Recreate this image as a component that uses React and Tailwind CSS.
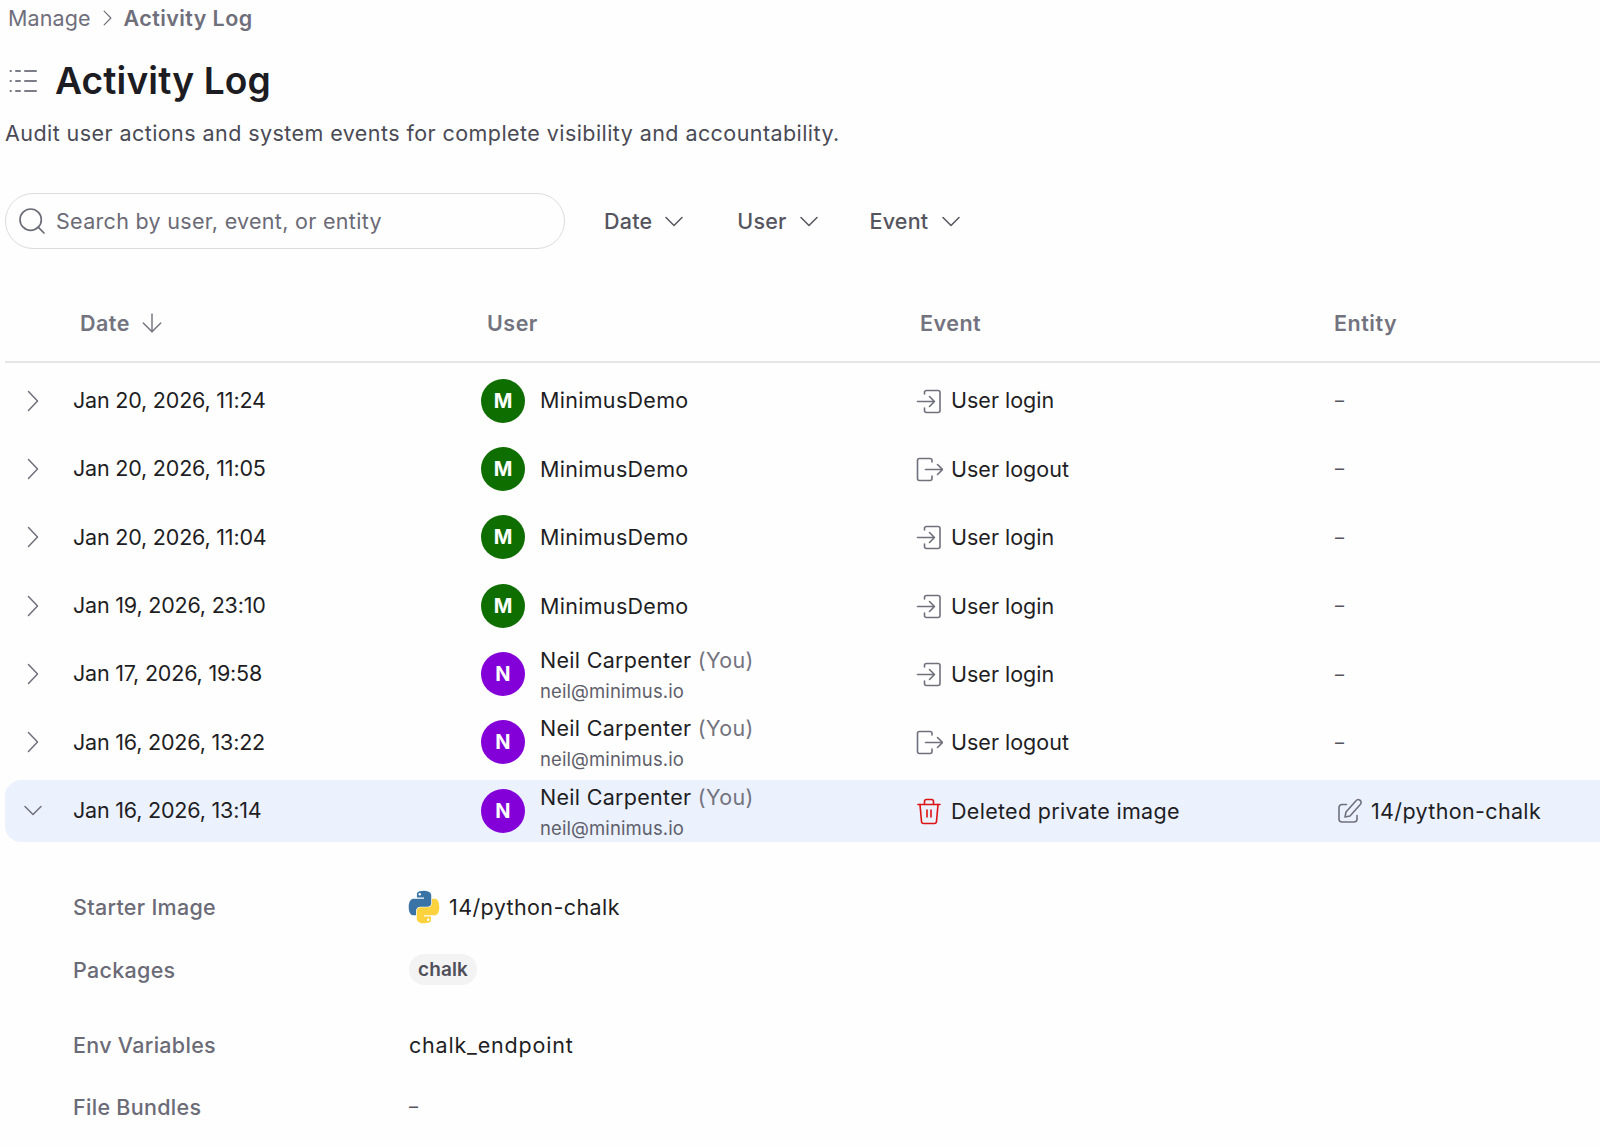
import React from 'react';
import { Search, ArrowDown } from 'lucide-react';

const rows = [
  { date: 'Jan 20, 2026, 11:24', user: 'demo', event: 'login' },
  { date: 'Jan 20, 2026, 11:05', user: 'demo', event: 'logout' },
  { date: 'Jan 20, 2026, 11:04', user: 'demo', event: 'login' },
  { date: 'Jan 19, 2026, 23:10', user: 'demo', event: 'login' },
  { date: 'Jan 17, 2026, 19:58', user: 'neil', event: 'login' },
  { date: 'Jan 16, 2026, 13:22', user: 'neil', event: 'logout' },
  { date: 'Jan 16, 2026, 13:14', user: 'neil', event: 'deleted', open: true },
];

function CaretRight({ w = 12, h = 22 }) {
  return (
    <svg width={w} height={h} viewBox="0 0 12 22" fill="none" stroke="currentColor" strokeWidth="1.500" strokeLinecap="round" strokeLinejoin="round" preserveAspectRatio="none">
      <path d="M1.500 1.500L10.500 11 1.500 20.500" />
    </svg>
  );
}

function CaretDown({ w = 18, h = 11 }) {
  return (
    <svg width={w} height={h} viewBox="0 0 18 11" fill="none" stroke="currentColor" strokeWidth="1.500" strokeLinecap="round" strokeLinejoin="round">
      <path d="M1 1.500L9 9.500 17 1.500" />
    </svg>
  );
}

function LoginIcon() {
  return (
    <svg width="26" height="26" viewBox="0 0 26 26" fill="none" stroke="#71717d" strokeWidth="1.600" strokeLinecap="round" strokeLinejoin="round">
      <path d="M8.500 6V4.500C8.500 3.400 9.400 2.500 10.500 2.500H22c1.100 0 2 .9 2 2v18c0 1.100-.9 2-2 2H10.500c-1.100 0-2-.9-2-2V20" />
      <path d="M1.500 13.500H18M13.500 8.500l5 5-5 5" />
    </svg>
  );
}

function LogoutIcon() {
  return (
    <svg width="27" height="26" viewBox="0 0 27 26" fill="none" stroke="#71717d" strokeWidth="1.600" strokeLinecap="round" strokeLinejoin="round">
      <path d="M16 6V4.500c0-1.100-.9-2-2-2H3.500c-1.100 0-2 .9-2 2v18c0 1.100.9 2 2 2H14c1.100 0 2-.9 2-2V20" />
      <path d="M9.500 13.500H26M21.500 8.500l5 5-5 5" />
    </svg>
  );
}

function TrashIcon() {
  return (
    <svg width="26" height="28" viewBox="0 0 26 28" fill="none" stroke="#dc1414" strokeWidth="1.600" strokeLinecap="round" strokeLinejoin="round" className="my-[-2px]">
      <path d="M2 7.500h22" />
      <path d="M8.500 7.500V4.500c0-1.100.9-2 2-2h5c1.100 0 2 .9 2 2v3" />
      <path d="M4 7.500l1.500 17c.1 1.200 1 2 2.200 2h10.600c1.200 0 2.100-.8 2.200-2L22 7.500" />
      <path d="M11 13v7M15 13v7" />
    </svg>
  );
}

function PenIcon() {
  return (
    <svg width="26" height="26" viewBox="0 0 26 26" fill="none" stroke="#71717d" strokeWidth="1.600" strokeLinecap="round" strokeLinejoin="round">
      <path d="M8.500 6.500H4a3 3 0 0 0-3 3V21a3 3 0 0 0 3 3h12a3 3 0 0 0 3-3v-3.500" />
      <path d="M7 19l1-5L18 2.800a2.600 2.600 0 0 1 4.500 3.400L12 18z" />
    </svg>
  );
}

function ListIcon() {
  return (
    <svg width="30" height="26" viewBox="0 0 30 26" fill="none" stroke="#7d7d88" strokeWidth="2" strokeLinecap="round">
      <path d="M1.500 3h.5M7 3h4M16 3h11M1.500 13h.5M7 13h4M16 13h11M1.500 23h.5M7 23h4M16 23h11" />
    </svg>
  );
}

function PythonIcon() {
  const shape = 'M11.900 .5C6.600 .5 7 2.800 7 2.800v2.500h5v.8H5S1.200 5.600 1.200 11.900s3.200 6 3.200 6h2v-2.900s-.1-3.100 3-3.100h4.900s2.800 0 2.800-2.700V3.400S16.900 .5 11.900 .5z';
  return (
    <svg width="34" height="34" viewBox="0 0 24 24" className="ml-[-2px]">
      <path d={shape} fill="#3a74a6" />
      <circle cx="9" cy="3" r=".85" fill="#fff" />
      <g transform="rotate(180 12 12)">
        <path d={shape} fill="#fdd23f" />
        <circle cx="9" cy="3" r=".85" fill="#fff" />
      </g>
    </svg>
  );
}

function UserCell({ user }) {
  if (user === 'demo') {
    return (
      <div className="flex items-center gap-[15px]">
        <div className="w-[44px] h-[44px] rounded-full bg-[#0f6e00] text-white font-bold text-[20px] flex items-center justify-center">M</div>
        <span className="tracking-[0.3px]">MinimusDemo</span>
      </div>
    );
  }
  return (
    <div className="flex items-center gap-[15px]">
      <div className="w-[44px] h-[44px] rounded-full bg-[#8400d8] text-white font-bold text-[20px] flex items-center justify-center">N</div>
      <div className="flex flex-col pt-[2px] mb-[-2px]">
        <span className="leading-[30px] tracking-[0.3px]">Neil Carpenter <span className="text-[#73737f]">(You)</span></span>
        <span className="text-[18.500px] leading-[32px] text-[#5f5f6b]">neil@minimus.io</span>
      </div>
    </div>
  );
}

function EventCell({ event }) {
  if (event === 'deleted') {
    return (
      <div className="flex items-center gap-[9px]">
        <TrashIcon />
        <span className="tracking-[0.3px]">Deleted private image</span>
      </div>
    );
  }
  return (
    <div className="flex items-center gap-[9px]">
      {event === 'login' ? <LoginIcon /> : <div className="w-[26px]"><LogoutIcon /></div>}
      <span className="tracking-[0px]">{event === 'login' ? 'User login' : 'User logout'}</span>
    </div>
  );
}

function DetailRow({ label, children, className }) {
  return (
    <div className={`flex items-center ${className}`}>
      <div className="w-[336px] text-[#6b6b77] font-medium tracking-[0.3px]">{label}</div>
      {children}
    </div>
  );
}

export default function App() {
  return (
    <div className="h-[1147px] overflow-hidden bg-[#fefefe] pl-[5px] text-[21.500px] text-[#1e1e24] font-['Inter',sans-serif] tracking-[0.1px]">
      <div className="flex items-center pl-[3px] h-[36px] text-[21.500px] text-[#6f6f7b]">
        <span>Manage</span>
        <span className="mx-[12px]"><CaretRight w={9} h={16} /></span>
        <span className="font-semibold tracking-[0.4px]">Activity Log</span>
      </div>

      <div className="flex items-center gap-[16px] pl-[4px] mt-[20px] h-[50px]">
        <ListIcon />
        <h1 className="text-[37.200px] font-semibold text-[#1c1c22]">Activity Log</h1>
      </div>

      <p className="mt-[13px] leading-[28px] text-[#4a4a55] tracking-[0.43px]">Audit user actions and system events for complete visibility and accountability.</p>

      <div className="flex items-center mt-[46px]">
        <div className="w-[560px] h-[56px] rounded-full border border-[#dcdce0] flex items-center pl-[10px] gap-[8px] text-[#6b6b77] tracking-[0.3px]">
          <Search size={32} strokeWidth={1.250} />
          <span>Search by user, event, or entity</span>
        </div>
        <div className="flex items-center gap-[13px] ml-[39px] text-[#55555f] font-medium tracking-[0.2px]">
          <span>Date</span>
          <CaretDown />
        </div>
        <div className="flex items-center gap-[13px] ml-[54px] text-[#55555f] font-medium tracking-[0.2px]">
          <span>User</span>
          <CaretDown />
        </div>
        <div className="flex items-center gap-[14px] ml-[52px] text-[#55555f] font-medium tracking-[0.2px]">
          <span>Event</span>
          <CaretDown />
        </div>
      </div>

      <div className="grid grid-cols-[476px_435px_415px_1fr] items-center h-[114px] pt-[36px] border-b-2 border-[#e6e6e8] text-[#73737f] font-semibold tracking-[0.5px]">
        <div className="flex items-center gap-[7px] pl-[75px]">
          <span>Date</span>
          <ArrowDown size={30} strokeWidth={1.150} />
        </div>
        <div className="pl-[6px]">User</div>
        <div className="pl-[4px]">Event</div>
        <div className="pl-[3px]">Entity</div>
      </div>

      <div className="flex flex-col gap-[6.400px] mt-[6.500px]">
        {rows.map((row) => (
          <div
            key={row.date}
            className={`grid grid-cols-[476px_435px_415px_1fr] items-center h-[62px] ${row.open ? 'bg-[#ebf1fd] rounded-l-[16px]' : ''}`}
          >
            <div className="flex items-center">
              <div className="w-[56px] flex justify-center text-[#6f6f7b]">
                {row.open ? <CaretDown /> : <CaretRight />}
              </div>
              <span className="ml-[12px] tracking-[-0.2px] pb-[1px]">{row.date}</span>
            </div>
            <UserCell user={row.user} />
            <EventCell event={row.event} />
            {row.open ? (
              <div className="flex items-center gap-[7px] pl-[7px]">
                <PenIcon />
                <span className="tracking-[0.35px]">14/python-chalk</span>
              </div>
            ) : (
              <div className="pl-[4px] text-[#55555f] text-[18px]">–</div>
            )}
          </div>
        ))}
      </div>

      <div className="pl-[68px] mt-[41px] flex flex-col">
        <DetailRow label="Starter Image" className="h-[48px]">
          <div className="flex items-center gap-[8px]">
            <PythonIcon />
            <span className="tracking-[0.4px]">14/python-chalk</span>
          </div>
        </DetailRow>
        <DetailRow label="Packages" className="h-[32px] mt-[23px]">
          <span className="px-[9px] h-[31px] flex items-center rounded-full bg-[#f3f3f4] text-[19px] font-semibold text-[#4f4f59]">chalk</span>
        </DetailRow>
        <DetailRow label="Env Variables" className="h-[32px] mt-[43px]">
          <span className="tracking-[0.8px]">chalk_endpoint</span>
        </DetailRow>
        <DetailRow label="File Bundles" className="h-[32px] mt-[30px]">
          <span className="text-[#55555f] text-[18px]">–</span>
        </DetailRow>
      </div>
    </div>
  );
}
